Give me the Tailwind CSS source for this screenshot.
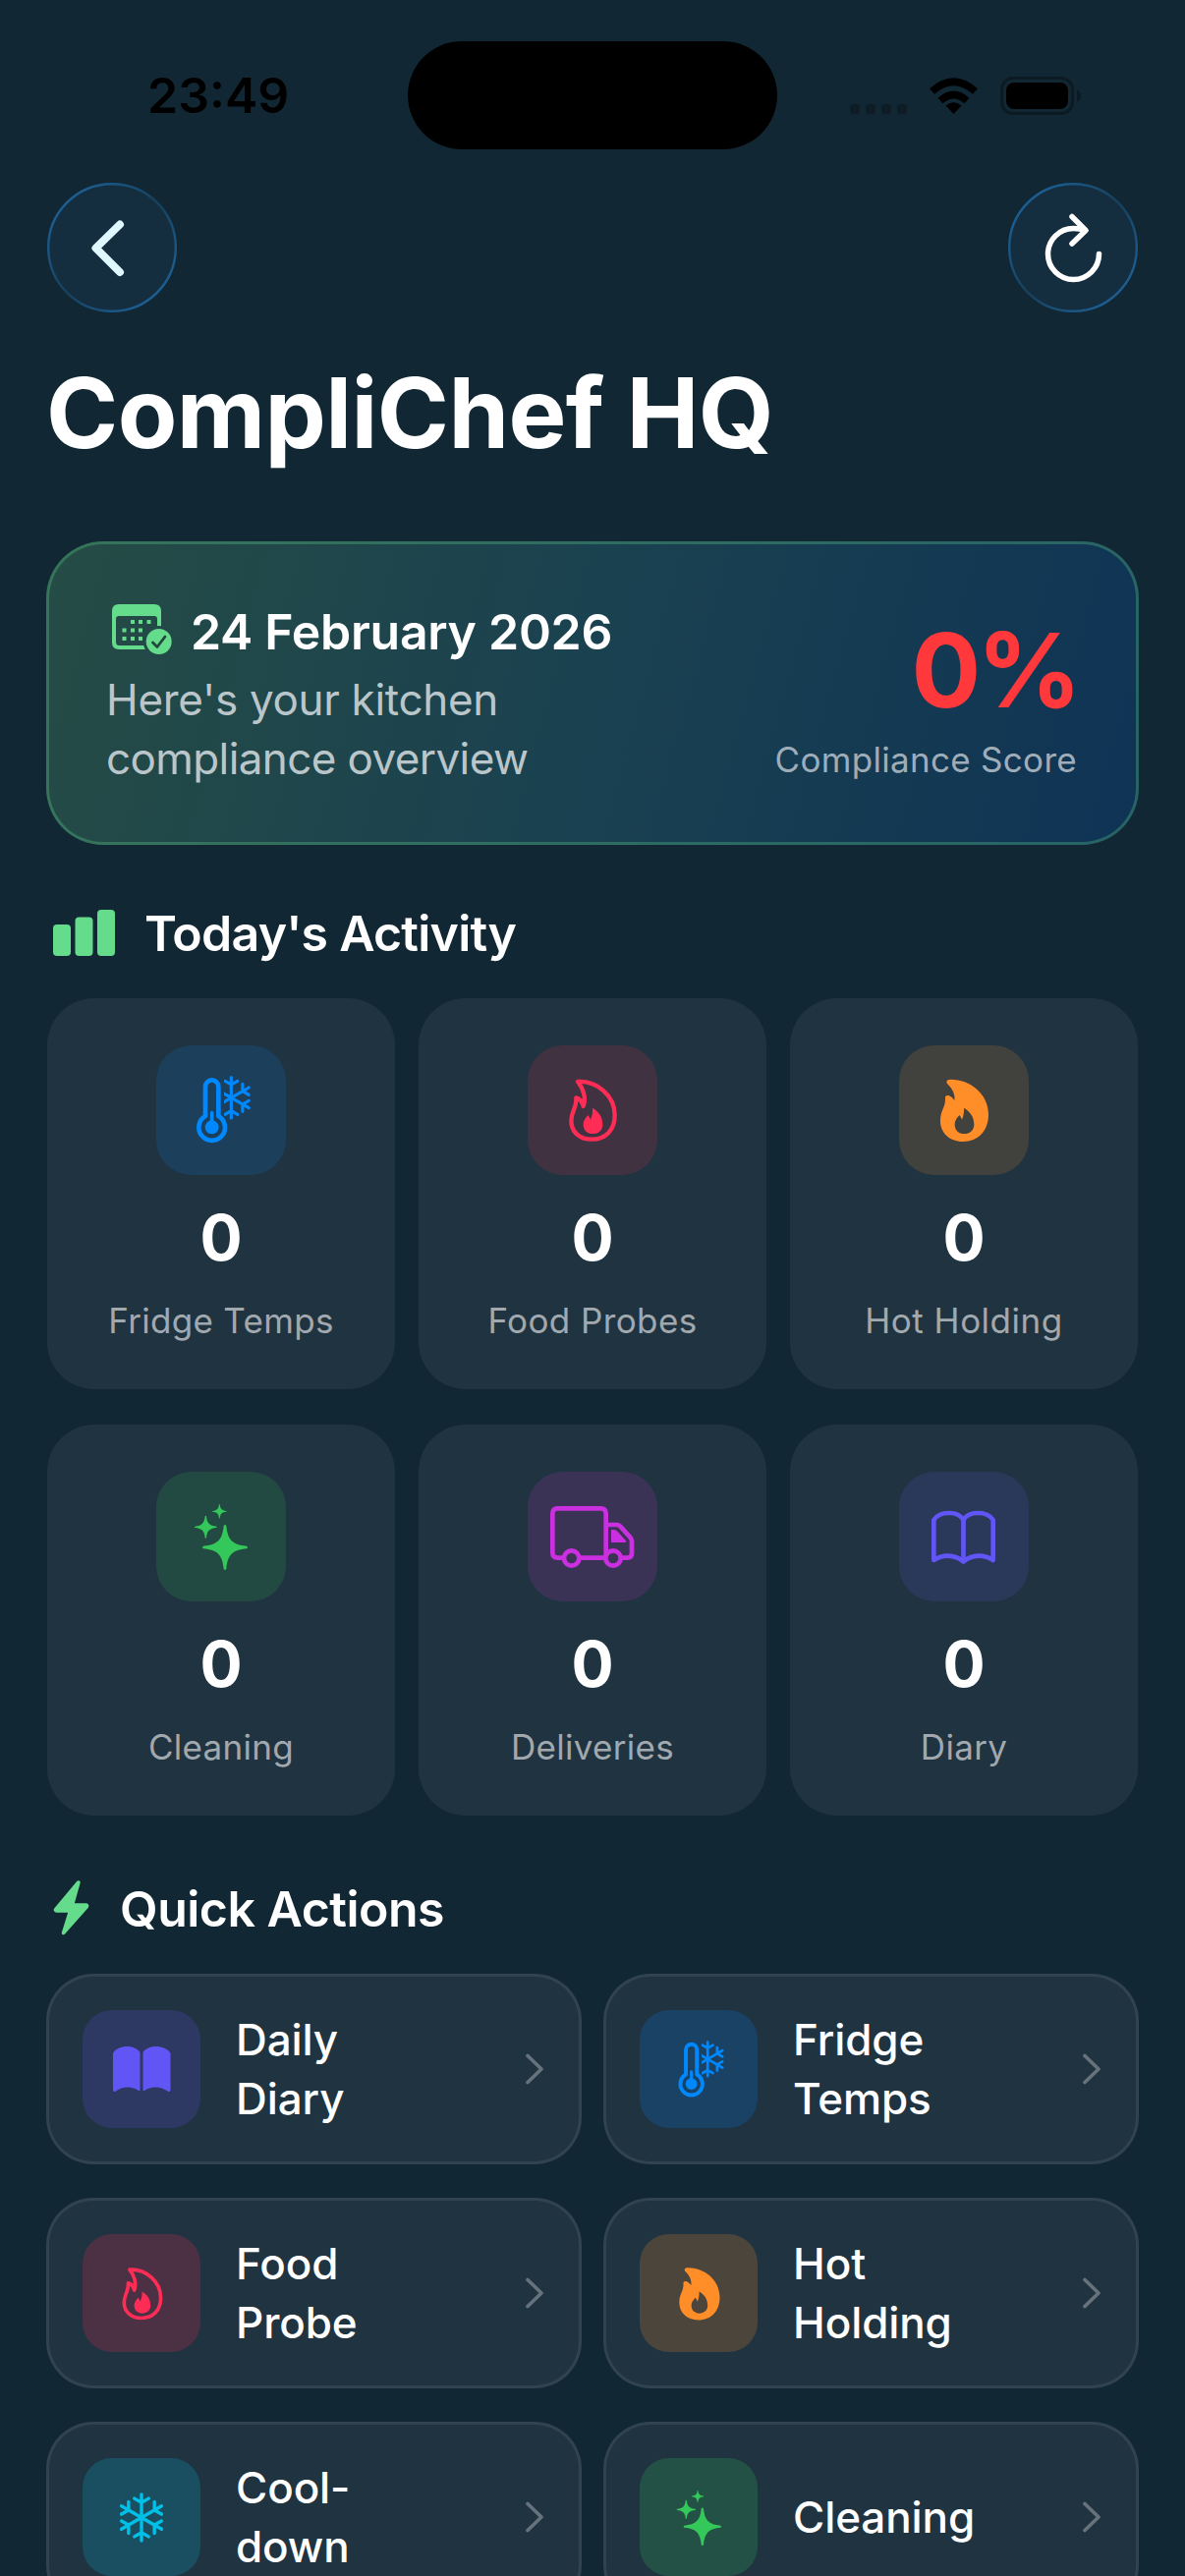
<!DOCTYPE html>
<html lang="en">
<head>
  <meta charset="UTF-8">
  <meta name="viewport" content="width=device-width, initial-scale=1.0">
  <title>CompliChef HQ</title>
  <script src="https://cdn.jsdelivr.net/npm/@tailwindcss/browser@4"></script>
</head>
<body class="bg-[#122734] text-white font-['Inter',sans-serif] w-[1206px] h-[2622px] overflow-hidden">

<!-- Icon sprite -->
<svg class="absolute w-0 h-0">
  <defs>
    <linearGradient id="glass" x1="0" y1="0" x2="1" y2="1">
      <stop offset="0.1" stop-color="#1d6299"/>
      <stop offset="0.5" stop-color="#17405c"/>
      <stop offset="0.9" stop-color="#1d6299"/>
    </linearGradient>
    <clipPath id="half"><rect x="264" y="150" width="90" height="160"/></clipPath>
    <path id="star" d="M-4 -66Q0 -72 4 -66C8 -23 23 -8 66 -4Q72 0 66 4C23 8 8 23 4 66Q0 72 -4 66C-8 23 -23 8 -66 4Q-72 0 -66 -4C-23 -8 -8 -23 -4 -66Z"/>
    <path id="arm" d="M0 0V-62M-19 -51L0 -40L19 -51"/>
    <g id="flake" fill="none" stroke="currentColor" stroke-linecap="round" stroke-linejoin="round">
      <use href="#arm"/>
      <use href="#arm" transform="rotate(60)"/>
      <use href="#arm" transform="rotate(120)"/>
      <use href="#arm" transform="rotate(180)"/>
      <use href="#arm" transform="rotate(240)"/>
      <use href="#arm" transform="rotate(300)"/>
    </g>
  </defs>
  <symbol id="thermo" viewBox="57 72 396 396">
    <path d="M207 288V198a20 20 0 0 1 40 0V288a40 40 0 1 1 -40 0Z" fill="none" stroke="currentColor" stroke-width="14" stroke-linejoin="round"/>
    <circle cx="227" cy="322" r="21" fill="currentColor"/>
    <path d="M227 278V322" stroke="currentColor" stroke-width="11" stroke-linecap="round"/>
    <g clip-path="url(#half)"><use href="#flake" transform="translate(286 232)" stroke-width="9.5"/></g>
  </symbol>
  <symbol id="flame" viewBox="51 72 396 396">
    <path d="M204 183C262 180 317 225 317 285C317 330 290 359 247 359C206 359 184 333 184 303C184 272 202 262 199 232C207 234 217 243 221 258C230 235 222 205 204 183Z" fill="none" stroke="currentColor" stroke-width="13" stroke-linejoin="round"/>
    <path d="M249 263C265 272 280 288 280 314C280 331 267 342 250 342C233 342 221 331 221 314C221 300 230 292 235 285C238 288 241 294 243 299C248 288 250 275 249 263Z" fill="currentColor"/>
  </symbol>
  <symbol id="flame-fill" viewBox="45 72 396 396">
    <path fill="currentColor" fill-rule="evenodd" d="M190 184C190 178 196 176 203 176C262 176 318 220 318 283C318 332 288 366 240 366C198 366 171 338 171 303C171 270 187 262 186 234C184 226 192 224 198 226C205 229 211 234 214 241C217 222 208 204 192 189ZM243 263C259 272 274 288 274 314C274 331 261 342 244 342C227 342 215 331 215 314C215 300 224 292 229 285C232 288 235 294 237 299C242 288 244 275 243 263Z"/>
  </symbol>
  <symbol id="sparkles" viewBox="57 54 396 396">
    <g fill="currentColor">
      <use href="#star" transform="translate(267 285)"/>
      <use href="#star" transform="translate(208 223) scale(.5)"/>
      <use href="#star" transform="translate(250 175) scale(.32)"/>
    </g>
  </symbol>
  <symbol id="truck" viewBox="51 54 396 396">
    <g fill="none" stroke="currentColor" stroke-width="14">
      <path d="M161 317H143Q127 317 127 301V182Q127 166 143 166H274Q290 166 290 182V310M212 317H286M292 216H322Q329 216 334 221L364 254Q369 260 369 267V303Q369 317 355 317H338"/>
      <circle cx="185" cy="318" r="23"/>
      <circle cx="312" cy="318" r="23"/>
    </g>
    <path d="M306 231H314Q320 231 325 236L351 265Q352 270 348 270H306Z" fill="currentColor"/>
  </symbol>
  <symbol id="book" viewBox="45 54 396 396">
    <path d="M241.500 201C225 173 170 173 151 201V324C175 307 215 304 241.500 329C268 304 308 307 332 324V201C313 173 258 173 241.500 201V329" fill="none" stroke="currentColor" stroke-width="14" stroke-linejoin="round"/>
  </symbol>
  <symbol id="book-fill" viewBox="0 0 120 120">
    <path fill="currentColor" d="M31 44C36 35 53 35 58.500 43V81Q58.500 83 57 82C51 77.500 41 77 34 82.500Q31 84 31 81ZM61.500 43C67 35 84 35 89.500 44V81Q89.500 84 86.500 82.500C79 77 69 77.500 63 82Q61.500 83 61.500 81Z"/>
  </symbol>
  <symbol id="snow" viewBox="0 0 120 120">
    <use href="#flake" transform="translate(60 60.500) scale(.38)" stroke-width="9"/>
  </symbol>
  <symbol id="chevron" viewBox="0 0 20 32">
    <path d="M3 2.500L17 16L3 29.500" fill="none" stroke="currentColor" stroke-width="3.600" stroke-linecap="round" stroke-linejoin="round"/>
  </symbol>
</svg>

<!-- Status bar -->
<div class="grid grid-cols-[415px_376px_1fr] h-[186px] pt-[42px] text-black">
  <div class="h-[110px] flex items-center pl-[150px] text-[50px] font-semibold">23:49</div>
  <div class="h-[110px] rounded-full bg-black"></div>
  <div class="h-[110px] flex items-center pl-[74px]">
    <svg class="w-[236px] h-[40px]" viewBox="865 77 236 40">
      <g fill="#0e1c26">
        <rect x="865" y="106" width="10" height="10" rx="4"/>
        <rect x="881" y="106" width="10" height="10" rx="4"/>
        <rect x="897" y="106" width="10" height="10" rx="4"/>
        <rect x="913" y="106" width="10" height="10" rx="4"/>
      </g>
      <path d="M970.500 116L962.500 107.500Q970.500 101 978.500 107.500Z"/>
      <path d="M957 102.500Q970.500 90.500 984 102.500M948.500 93Q970.500 73.500 992.500 93" fill="none" stroke="#000" stroke-width="7.500"/>
      <rect x="1019.500" y="79.500" width="72" height="36" rx="11.500" fill="none" stroke="#0c1a24" stroke-width="3"/>
      <rect x="1024" y="84" width="63" height="27" rx="8"/>
      <path d="M1096 91.500Q1100 93 1100 97.500T1096 103.500Z" fill="#0c1a24"/>
    </svg>
  </div>
</div>

<!-- Navigation -->
<div class="flex justify-between px-[48px]">
  <svg class="size-[132px]" viewBox="0 0 132 132">
    <circle cx="66" cy="66" r="64.800" fill="#142e40" stroke="url(#glass)" stroke-width="2.400"/>
    <path d="M74 42.500L49.500 66.500L74 91" fill="none" stroke="#dff8ff" stroke-width="8" stroke-linecap="round" stroke-linejoin="round"/>
  </svg>
  <svg class="size-[132px]" viewBox="0 0 132 132">
    <circle cx="66" cy="66" r="64.800" fill="#142e40" stroke="url(#glass)" stroke-width="2.400"/>
    <path d="M92.500 72.500A26 26 0 1 1 66.500 46.500Q73 46.500 79 48.500M65 34.500L79 48.500L65 62" fill="none" stroke="#fff" stroke-width="5.500" stroke-linecap="round" stroke-linejoin="round"/>
  </svg>
</div>

<h1 class="mt-[42px] ml-[47px] text-[99px] leading-[120px] font-bold tracking-[-0.6px]">CompliChef HQ</h1>

<!-- Overview -->
<div class="mt-[71px] mx-[47px] h-[309px] rounded-[58px] border-3 border-[#5fd48a]/30 bg-[linear-gradient(105.6deg,#254c45,#1a4150_50%,#0f3355)] bg-origin-border pl-[60px] pr-[60px] flex justify-between">
  <div class="pt-[59px]">
    <div class="flex gap-[18px]">
      <svg class="w-[66px] h-[60px]" viewBox="110 613 66 60">
        <mask id="badge"><rect x="100" y="600" width="90" height="90" fill="#fff"/><circle cx="161.700" cy="653" r="16" fill="#000"/></mask>
        <g mask="url(#badge)" fill="#65db8c">
          <path fill-rule="evenodd" d="M121 615H157Q164 615 164 622V654Q164 661 157 661H121Q114 661 114 654V622Q114 615 121 615ZM121 627Q118 627 118 630V653.500Q118 657 121.500 657H156.500Q160 657 160 653.500V630Q160 627 157 627Z"/>
          <path d="M133 631h4v4h-4zM141 631h4v4h-4zM149.500 631h4v4h-4zM124.500 639.500h4v4h-4zM133 639.500h4v4h-4zM141 639.500h4v4h-4zM124.500 648h4v4h-4zM133 648h4v4h-4zM141 648h4v4h-4z"/>
        </g>
        <circle cx="161.700" cy="653" r="13" fill="#65db8c"/>
        <path d="M155.500 654L160 658.500L168 648" fill="none" stroke="#23493f" stroke-width="2.800" stroke-linecap="round" stroke-linejoin="round"/>
      </svg>
      <div class="text-[50px] leading-[60px] font-semibold whitespace-nowrap tracking-[-0.3px]">24 February 2026</div>
    </div>
    <p class="mt-[9px] -ml-[2px] text-[44px] leading-[60px] tracking-[-0.6px] text-[#bbc6ca] whitespace-nowrap"><span class="tracking-[-0.3px]">Here's your kitchen</span><br>compliance overview</p>
  </div>
  <div class="pt-[68px] text-right">
    <div class="-mr-[1px] text-[105px] leading-[120px] font-bold tracking-[-4px] text-[#ff383c]">0%</div>
    <div class="mt-[9px] text-[35px] leading-[44px] tracking-[0.3px] text-[#9fadb9] whitespace-nowrap">Compliance Score</div>
  </div>
</div>

<!-- Today's activity -->
<div class="mt-[60px] ml-[48px] flex">
  <svg class="w-[99px] h-[60px]" viewBox="48 920 99 60" fill="#65db8c">
    <rect x="54" y="941" width="18" height="32" rx="4"/>
    <rect x="76.500" y="933.500" width="18" height="39.500" rx="4"/>
    <rect x="99" y="926" width="18" height="47" rx="4"/>
  </svg>
  <h2 class="text-[50px] leading-[60px] font-semibold tracking-[-0.75px]">Today's Activity</h2>
</div>

<div class="mt-[36px] mx-[48px] grid grid-cols-3 gap-x-[24px] gap-y-[36px] text-center">
  <div class="h-[398px] rounded-[48px] bg-[#203340] pt-[48px]">
    <div class="mx-auto size-[132px] rounded-[36px] bg-[#1c3f5b] text-[#0088ff]"><svg class="size-[132px]"><use href="#thermo"/></svg></div>
    <div class="mt-[26px] text-[64px] leading-[76px] font-bold">0</div>
    <div class="mt-[24px] text-[35px] leading-[44px] tracking-[0.3px] text-[#a1a9af]">Fridge Temps</div>
  </div>
  <div class="h-[398px] rounded-[48px] bg-[#203340] pt-[48px]">
    <div class="mx-auto size-[132px] rounded-[36px] bg-[#413242] text-[#ff2d55]"><svg class="size-[132px]"><use href="#flame"/></svg></div>
    <div class="mt-[26px] text-[64px] leading-[76px] font-bold">0</div>
    <div class="mt-[24px] text-[35px] leading-[44px] tracking-[0.4px] text-[#a1a9af]">Food Probes</div>
  </div>
  <div class="h-[398px] rounded-[48px] bg-[#203340] pt-[48px]">
    <div class="mx-auto size-[132px] rounded-[36px] bg-[#41413d] text-[#ff8d28]"><svg class="size-[132px]"><use href="#flame-fill"/></svg></div>
    <div class="mt-[26px] text-[64px] leading-[76px] font-bold">0</div>
    <div class="mt-[24px] text-[35px] leading-[44px] tracking-[0.5px] text-[#a1a9af]">Hot Holding</div>
  </div>
  <div class="h-[398px] rounded-[48px] bg-[#203340] pt-[48px]">
    <div class="mx-auto size-[132px] rounded-[36px] bg-[#234943] text-[#34c759]"><svg class="size-[132px]"><use href="#sparkles"/></svg></div>
    <div class="mt-[26px] text-[64px] leading-[76px] font-bold">0</div>
    <div class="mt-[24px] text-[35px] leading-[44px] tracking-[0.3px] text-[#a1a9af]">Cleaning</div>
  </div>
  <div class="h-[398px] rounded-[48px] bg-[#203340] pt-[48px]">
    <div class="mx-auto size-[132px] rounded-[36px] bg-[#3a3356] text-[#cb30e0]"><svg class="size-[132px]"><use href="#truck"/></svg></div>
    <div class="mt-[26px] text-[64px] leading-[76px] font-bold">0</div>
    <div class="mt-[24px] text-[35px] leading-[44px] tracking-[0.3px] text-[#a1a9af]">Deliveries</div>
  </div>
  <div class="h-[398px] rounded-[48px] bg-[#203340] pt-[48px]">
    <div class="mx-auto size-[132px] rounded-[36px] bg-[#2a385a] text-[#6155f5]"><svg class="size-[132px]"><use href="#book"/></svg></div>
    <div class="mt-[26px] text-[64px] leading-[76px] font-bold">0</div>
    <div class="mt-[24px] text-[35px] leading-[44px] tracking-[0.3px] text-[#a1a9af]">Diary</div>
  </div>
</div>

<!-- Quick actions -->
<div class="mt-[65px] ml-[48px] flex">
  <svg class="w-[74px] h-[60px]" viewBox="48 1913 74 60">
    <path d="M79.500 1916L56.500 1943.500Q56 1945 58 1945H71.500L64.500 1967.500L88.500 1940.500Q89 1939 87.500 1939H73.500L80 1916Z" fill="#65db8c" stroke="#65db8c" stroke-width="3.500" stroke-linejoin="round"/>
  </svg>
  <h2 class="text-[50px] leading-[60px] font-semibold tracking-[-0.5px]">Quick Actions</h2>
</div>

<div class="mt-[36px] mx-[47px] grid grid-cols-2 gap-x-[22px] gap-y-[34px] text-[44px] leading-[60px] font-medium tracking-[-0.1px]">
  <div class="h-[194px] rounded-[48px] border-3 border-white/8 bg-[#203340] flex items-center pl-[34px] pr-[35px]">
    <div class="size-[120px] rounded-[30px] bg-[#2d3962] text-[#6155f5] flex items-center justify-center"><svg class="size-[120px]"><use href="#book-fill"/></svg></div>
    <div class="ml-[36px] flex-1">Daily<br>Diary</div>
    <svg class="w-[20px] h-[32px] text-[#66737c]"><use href="#chevron"/></svg>
  </div>
  <div class="h-[194px] rounded-[48px] border-3 border-white/8 bg-[#203340] flex items-center pl-[34px] pr-[35px]">
    <div class="size-[120px] rounded-[30px] bg-[#1a4265] text-[#0088ff] flex items-center justify-center"><svg class="size-[111px]"><use href="#thermo"/></svg></div>
    <div class="ml-[36px] flex-1">Fridge<br>Temps</div>
    <svg class="w-[20px] h-[32px] text-[#66737c]"><use href="#chevron"/></svg>
  </div>
  <div class="h-[194px] rounded-[48px] border-3 border-white/8 bg-[#203340] flex items-center pl-[34px] pr-[35px]">
    <div class="size-[120px] rounded-[30px] bg-[#4c3043] text-[#ff2d55] flex items-center justify-center"><svg class="size-[111px]"><use href="#flame"/></svg></div>
    <div class="ml-[36px] flex-1">Food<br>Probe</div>
    <svg class="w-[20px] h-[32px] text-[#66737c]"><use href="#chevron"/></svg>
  </div>
  <div class="h-[194px] rounded-[48px] border-3 border-white/8 bg-[#203340] flex items-center pl-[34px] pr-[35px]">
    <div class="size-[120px] rounded-[30px] bg-[#4c453b] text-[#ff8d28] flex items-center justify-center"><svg class="size-[111px]"><use href="#flame-fill"/></svg></div>
    <div class="ml-[36px] flex-1">Hot<br>Holding</div>
    <svg class="w-[20px] h-[32px] text-[#66737c]"><use href="#chevron"/></svg>
  </div>
  <div class="h-[194px] rounded-[48px] border-3 border-white/8 bg-[#203340] flex items-center pl-[34px] pr-[35px]">
    <div class="size-[120px] rounded-[30px] bg-[#194f61] text-[#00c0e8] flex items-center justify-center"><svg class="size-[120px]"><use href="#snow"/></svg></div>
    <div class="ml-[36px] flex-1">Cool-<br>down</div>
    <svg class="w-[20px] h-[32px] text-[#66737c]"><use href="#chevron"/></svg>
  </div>
  <div class="h-[194px] rounded-[48px] border-3 border-white/8 bg-[#203340] flex items-center pl-[34px] pr-[35px]">
    <div class="size-[120px] rounded-[30px] bg-[#245145] text-[#34c759] flex items-center justify-center"><svg class="size-[111px]"><use href="#sparkles"/></svg></div>
    <div class="ml-[36px] flex-1">Cleaning</div>
    <svg class="w-[20px] h-[32px] text-[#66737c]"><use href="#chevron"/></svg>
  </div>
</div>
</body>
</html>
